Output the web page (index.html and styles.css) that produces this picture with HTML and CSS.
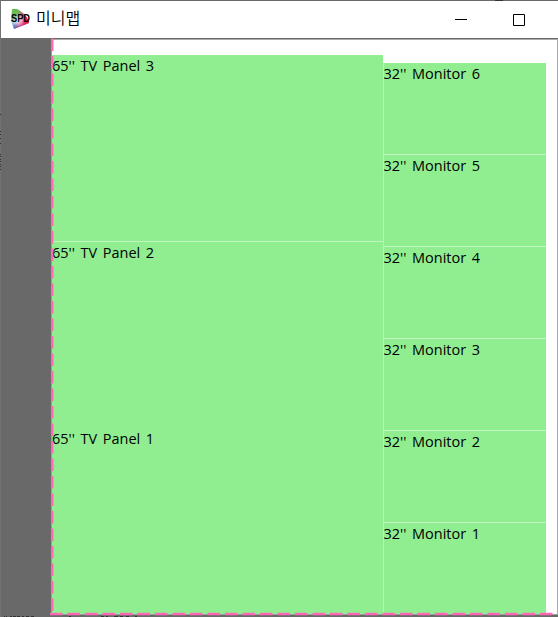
FILE: index.html
```html
<!DOCTYPE html>
<html lang="ko">
<head>
<meta charset="utf-8">
<title>미니맵</title>
<link rel="stylesheet" href="styles.css">
</head>
<body>
<div class="window">
  <header class="titlebar">
    <svg class="logo" width="20" height="20" viewBox="0 0 20 20">
      <defs>
        <linearGradient id="hue" x1="0" y1="0" x2="0.25" y2="1">
          <stop offset="0" stop-color="#62bd43"/><stop offset=".38" stop-color="#70bd62"/><stop offset=".65" stop-color="#a7d8ee"/><stop offset="1" stop-color="#3159c7"/>
        </linearGradient>
        <linearGradient id="red" x1="0" y1="0" x2="1" y2="0.3">
          <stop offset=".35" stop-color="#f04d88" stop-opacity="0"/><stop offset=".8" stop-color="#ed2f70"/><stop offset="1" stop-color="#e62250"/>
        </linearGradient>
        <radialGradient id="white" cx=".42" cy=".55" r=".35">
          <stop offset="0" stop-color="#fff" stop-opacity=".9"/><stop offset="1" stop-color="#fff" stop-opacity="0"/>
        </radialGradient>
      </defs>
      <path d="M1 0H6Q14 4 18 12V14L3 20L0 12Z" fill="url(#hue)"/>
      <path d="M1 0H6Q14 4 18 12V14L3 20L0 12Z" fill="url(#red)"/>
      <path d="M1 0H6Q14 4 18 12V14L3 20L0 12Z" fill="url(#white)"/>
      <text x="0" y="12.5" textLength="19" lengthAdjust="spacingAndGlyphs">SPD</text>
    </svg>
    <h1>미니맵</h1>
    <svg class="controls" width="72" height="14" viewBox="0 0 72 14">
      <path d="M1 6.5H13M59.5 1.5H70.5V12.5H59.5Z"/>
    </svg>
  </header>
  <main class="content">
    <aside class="gutter"></aside>
    <section class="map">
      <div class="tvs">
        <div class="panel">65'' TV Panel 3</div>
        <div class="panel">65'' TV Panel 2</div>
        <div class="panel">65'' TV Panel 1</div>
      </div>
      <div class="monitors">
        <div class="panel">32'' Monitor 6</div>
        <div class="panel">32'' Monitor 5</div>
        <div class="panel">32'' Monitor 4</div>
        <div class="panel">32'' Monitor 3</div>
        <div class="panel">32'' Monitor 2</div>
        <div class="panel">32'' Monitor 1</div>
      </div>
      <svg class="guides" width="508" height="578" viewBox="50 38 508 578">
        <path class="halo" d="M51.5 39V614M51 614.5H557"/>
        <path class="dash" d="M52.2 38.5V613M50 613.9H554"/>
      </svg>
    </section>
  </main>
  <footer class="edge"></footer>
  <svg class="specks" width="558" height="617" viewBox="0 0 558 617">
    <path d="M.5 114v1m0 16v1m0 2v1m0 3v1m0 4v1m0 10v1m0 1v1m0 2v1m0 1v1m0 2v1m0 1v1m0 2v1M495 .5h8"/>
    <path d="M4 616.5h1m1 0h1m3 0h2m1 0h3m1 0h3m2 0h2m2 0h3m2 0h3m35 0h2m30 0h3m2 0h2m6 0h4m2 0h3m3 0h3m6 0h2"/>
  </svg>
</div>
</body>
</html>
```
FILE: styles.css
```css
* { box-sizing: border-box; }
body { margin: 0; overflow: hidden; background: #696969; }
.window {
  width: 558px;
  height: 617px;
  display: flex;
  flex-direction: column;
  border-top: 1px solid #696969;
  border-left: 1px solid #737373;
  color: #000;
}
.titlebar {
  height: 37px;
  flex: none;
  display: flex;
  align-items: center;
  padding: 0 32px 0 10px;
  background: #fff;
}
.logo { overflow: visible; margin-bottom: 1px; }
.logo text { font: 700 10px "Liberation Sans", sans-serif; }
h1 {
  margin: 0 0 5px 5px;
  font: 350 16px/20px "Noto Sans CJK KR", sans-serif;
}
.controls { margin-left: auto; fill: none; stroke: #000; }
.content {
  height: 577px;
  flex: none;
  display: flex;
  border-top: 1px solid #696969;
}
.gutter { width: 50px; flex: none; background: #696969; }
.map {
  position: relative;
  flex: 1;
  display: flex;
  align-items: flex-end;
  background: #fff;
  border-top: 1px solid #aaa;
  border-right: 1px solid #aaa;
}
.tvs, .monitors { display: grid; background: #90ee90; }
.tvs {
  width: 332px;
  height: 560px;
  grid-template-rows: 186px 187px 187px;
}
.monitors {
  width: 163px;
  height: 552px;
  grid-template-rows: 91px repeat(5, 92px);
  border-left: 1px solid #b8f4b8;
}
.panel {
  font: 400 14.5px/22px "Open Sans", sans-serif;
  word-spacing: 1.8px;
  white-space: nowrap;
}
.panel + .panel { border-top: 1px solid #c2f5c2; }
.tvs .panel { padding-left: 1px; }
.tvs .panel:last-child { border-top: 0; }
.monitors .panel { text-indent: -0.5px; }
.guides { position: absolute; left: -1px; top: -2px; }
.halo { stroke: #9b9b9b; stroke-width: 1; fill: none; }
.dash {
  stroke: #ff69b4;
  stroke-width: 2.5;
  stroke-dasharray: 12.5 5;
  fill: none;
}
.edge { flex: 1; background: #696969; }
.specks {
  position: absolute;
  left: 0;
  top: 0;
  fill: none;
  stroke: #333;
  pointer-events: none;
}
```
